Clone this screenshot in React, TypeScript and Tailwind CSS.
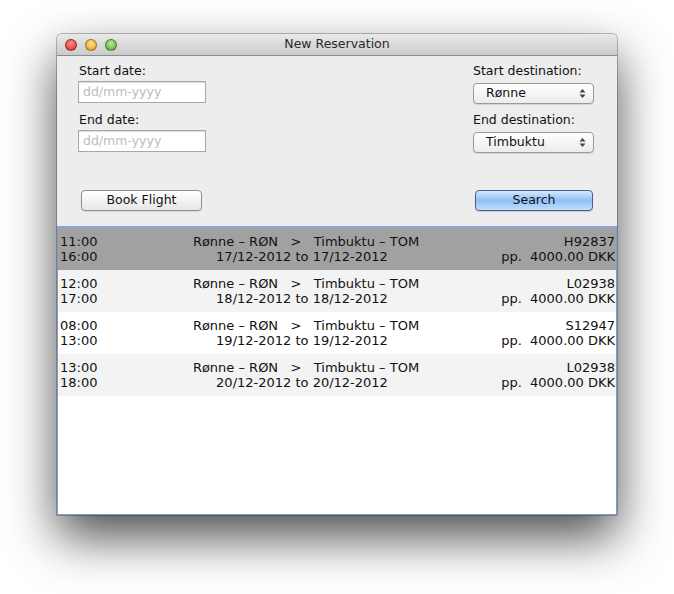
import React from "react";

type Flight = {
  dep: string;
  arr: string;
  date: string;
  code: string;
};

const flights: Flight[] = [
  { dep: "11:00", arr: "16:00", date: "17/12-2012 to 17/12-2012", code: "H92837" },
  { dep: "12:00", arr: "17:00", date: "18/12-2012 to 18/12-2012", code: "L02938" },
  { dep: "08:00", arr: "13:00", date: "19/12-2012 to 19/12-2012", code: "S12947" },
  { dep: "13:00", arr: "18:00", date: "20/12-2012 to 20/12-2012", code: "L02938" },
];

const font = { fontFamily: '"DejaVu Sans", "Noto Sans", sans-serif' };

const DateField = () => (
  <div className="w-[128px] h-[22px] bg-white border border-[#a8a8a8] shadow-[inset_0_1px_1px_rgba(0,0,0,0.15)] flex items-center px-[4px] text-[12.5px] text-[#bdbdbd]">
    dd/mm-yyyy
  </div>
);

const Select = ({ value }: { value: string }) => (
  <div className="w-[121px] h-[21px] rounded-[4px] border border-[#9a9a9a] bg-gradient-to-b from-white to-[#ececec] shadow-[0_1px_1px_rgba(0,0,0,0.1)] flex items-center justify-between pl-[12px] pr-[7px] text-[12.5px] text-[#111]">
    <span>{value}</span>
    <svg width="7" height="11" viewBox="0 0 7 11">
      <path d="M3.5 1 L6.5 4.5 L0.5 4.5 Z" fill="#444" />
      <path d="M3.5 10 L6.5 6.5 L0.5 6.5 Z" fill="#444" />
    </svg>
  </div>
);

const TrafficLight = ({ from, to }: { from: string; to: string }) => (
  <div
    className="w-[12px] h-[12px] rounded-full border border-[rgba(0,0,0,0.35)]"
    style={{ background: `radial-gradient(circle at 50% 35%, ${from}, ${to})` }}
  />
);

export default function App() {
  return (
    <div className="w-[674px] h-[594px] bg-white pl-[57px] pt-[34px]" style={font}>
      <div className="w-[560px] h-[481px] flex flex-col rounded-t-[5px] bg-[#ededed] shadow-[0_22px_50px_rgba(0,0,0,0.7),0_0_0_1px_rgba(0,0,0,0.25)]">
        {/* Title bar */}
        <div className="h-[22px] rounded-t-[5px] bg-gradient-to-b from-[#e9e9e9] to-[#cbcbcb] border-b border-[#8c8c8c] flex items-center relative">
          <div className="flex gap-[8px] pl-[8px]">
            <TrafficLight from="#ff8f86" to="#d3262b" />
            <TrafficLight from="#ffe08a" to="#e09a15" />
            <TrafficLight from="#b5ef8c" to="#4ea22f" />
          </div>
          <div className="absolute inset-0 flex items-center justify-center text-[12.5px] text-[#2a2a2a]">
            New Reservation
          </div>
        </div>

        {/* Form */}
        <div className="h-[170px] flex justify-between pl-[21px] pr-[23px] pt-[5px] text-[12.5px] text-[#111]">
          <div className="flex flex-col">
            <div className="h-[20px] flex items-center pl-[1px]">Start date:</div>
            <DateField />
            <div className="h-[20px] mt-[7px] flex items-center pl-[1px]">End date:</div>
            <DateField />
            <button className="mt-[38px] ml-[3px] w-[121px] h-[21px] rounded-[4px] border border-[#8f8f8f] bg-gradient-to-b from-white to-[#e6e6e6] shadow-[0_1px_1px_rgba(0,0,0,0.1)] text-[12.5px] text-[#111]">
              Book Flight
            </button>
          </div>
          <div className="flex flex-col">
            <div className="h-[20px] flex items-center">Start destination:</div>
            <div className="mt-[2px]">
              <Select value="Rønne" />
            </div>
            <div className="h-[20px] mt-[6px] flex items-center">End destination:</div>
            <div className="mt-[2px]">
              <Select value="Timbuktu" />
            </div>
            <button className="mt-[37px] ml-[2px] w-[118px] h-[21px] rounded-[4px] border border-[#4c5e8f] bg-gradient-to-b from-[#d6e9fd] via-[#8fc0f8] to-[#bfe0fe] shadow-[0_1px_1px_rgba(0,0,0,0.15)] text-[12.5px] text-[#111]">
              Search
            </button>
          </div>
        </div>

        {/* Results list */}
        <div className="flex-1 bg-white border border-[#7f9dcf] border-t-[2px] border-t-[#8aa6d4] text-[13px] text-[#111] leading-[15px]">
          {flights.map((f, i) => (
            <div
              key={i}
              className={`h-[42px] flex items-center pl-[2px] pr-[1px] ${
                i === 0 ? "bg-[#a1a1a1]" : i % 2 === 1 ? "bg-[#f3f3f3]" : "bg-white"
              }`}
            >
              <div className="w-[60px] flex flex-col">
                <span>{f.dep}</span>
                <span>{f.arr}</span>
              </div>
              <div className="flex-1 flex flex-col items-center whitespace-pre">
                <span>{"Rønne – RØN   >   Timbuktu – TOM"}</span>
                <span className="pr-[8px]">{f.date}</span>
              </div>
              <div className="w-[123px] flex flex-col items-end whitespace-pre">
                <span>{f.code}</span>
                <span>{"pp.  4000.00 DKK"}</span>
              </div>
            </div>
          ))}
        </div>
      </div>
    </div>
  );
}
